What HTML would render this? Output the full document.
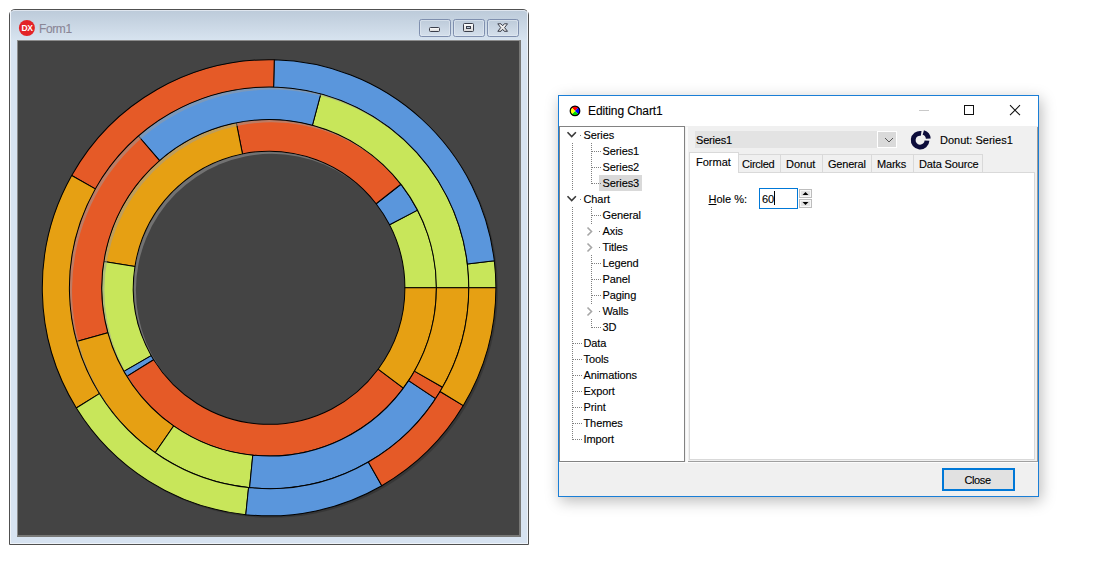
<!DOCTYPE html>
<html><head><meta charset="utf-8">
<style>
html,body{margin:0;padding:0;background:#fff;width:1096px;height:563px;overflow:hidden;position:relative;font-family:"Liberation Sans",sans-serif;}
.a{position:absolute;box-sizing:border-box;}
.t{position:absolute;white-space:pre;font-family:"Liberation Sans",sans-serif;line-height:1;-webkit-text-stroke:0.12px currentColor;}
</style></head><body>

<!-- ============ FORM1 WINDOW ============ -->
<div class="a" style="left:9px;top:9px;width:520px;height:536px;border:1px solid #505050;border-radius:6px 6px 0 0;background:#d7e3f1;"></div>
<div class="a" style="left:10px;top:10px;width:518px;height:31px;border-radius:5px 5px 0 0;background:linear-gradient(#bdcbda,#d8e4f0);border-top:1px solid #dfe6ef;"></div>
<div class="a" style="left:10px;top:11px;width:1px;height:533px;background:#eef3f9;"></div>
<div class="a" style="left:527px;top:11px;width:1px;height:533px;background:#eef3f9;"></div>
<div class="a" style="left:10px;top:543px;width:518px;height:1px;background:#eef3f9;"></div>
<div class="a" style="left:17px;top:40px;width:504px;height:497px;background:#444;border-top:1px solid #8c8c8c;border-left:1px solid #8c8c8c;border-right:2px solid #787876;border-bottom:2px solid #787876;"></div>

<svg class="a" style="left:0;top:0" width="1096" height="563" viewBox="0 0 1096 563">
<defs><clipPath id="pc"><rect x="18" y="41" width="501" height="494"/></clipPath></defs>
<g clip-path="url(#pc)">
<g transform="translate(269.1,287.8) scale(1,1.0055) translate(-269.1,-287.8)"><mask id="ms"><rect x="0" y="0" width="1096" height="563" fill="#fff"/><circle cx="269.1" cy="287.8" r="226.8" fill="#000"/></mask>
<circle cx="271.1" cy="289.8" r="226.8" fill="#2a2a2a" opacity="0.5" mask="url(#ms)"/>
<path d="M436.40,287.80A167.3,167.3 0 0 0 417.50,210.55L389.56,225.09A135.8,135.8 0 0 1 404.90,287.80Z" fill="#c8e65a" stroke="#000" stroke-width="1.0" stroke-linejoin="round"/>
<path d="M417.50,210.55A167.3,167.3 0 0 0 400.93,184.80L376.11,204.19A135.8,135.8 0 0 1 389.56,225.09Z" fill="#5a96dc" stroke="#000" stroke-width="1.0" stroke-linejoin="round"/>
<path d="M400.93,184.80A167.3,167.3 0 0 0 236.32,123.74L242.49,154.63A135.8,135.8 0 0 1 376.11,204.19Z" fill="#e55a27" stroke="#000" stroke-width="1.0" stroke-linejoin="round"/>
<path d="M236.32,123.74A167.3,167.3 0 0 0 103.86,261.63L134.97,266.56A135.8,135.8 0 0 1 242.49,154.63Z" fill="#e6a013" stroke="#000" stroke-width="1.0" stroke-linejoin="round"/>
<path d="M103.86,261.63A167.3,167.3 0 0 0 123.92,370.94L151.26,355.29A135.8,135.8 0 0 1 134.97,266.56Z" fill="#c8e65a" stroke="#000" stroke-width="1.0" stroke-linejoin="round"/>
<path d="M123.92,370.94A167.3,167.3 0 0 0 126.91,375.96L153.68,359.36A135.8,135.8 0 0 1 151.26,355.29Z" fill="#5a96dc" stroke="#000" stroke-width="1.0" stroke-linejoin="round"/>
<path d="M126.91,375.96A167.3,167.3 0 0 0 403.41,387.55L378.12,368.77A135.8,135.8 0 0 1 153.68,359.36Z" fill="#e55a27" stroke="#000" stroke-width="1.0" stroke-linejoin="round"/>
<path d="M403.41,387.55A167.3,167.3 0 0 0 436.40,287.80L404.90,287.80A135.8,135.8 0 0 1 378.12,368.77Z" fill="#e6a013" stroke="#000" stroke-width="1.0" stroke-linejoin="round"/>
<path d="M468.80,287.80A199.7,199.7 0 0 0 320.79,94.90L312.40,126.20A167.3,167.3 0 0 1 436.40,287.80Z" fill="#c8e65a" stroke="#000" stroke-width="1.0" stroke-linejoin="round"/>
<path d="M320.79,94.90A199.7,199.7 0 0 0 138.35,136.86L159.56,161.35A167.3,167.3 0 0 1 312.40,126.20Z" fill="#5a96dc" stroke="#000" stroke-width="1.0" stroke-linejoin="round"/>
<path d="M138.35,136.86A199.7,199.7 0 0 0 76.66,341.17L107.88,332.51A167.3,167.3 0 0 1 159.56,161.35Z" fill="#e55a27" stroke="#000" stroke-width="1.0" stroke-linejoin="round"/>
<path d="M76.66,341.17A199.7,199.7 0 0 0 155.13,451.78L173.62,425.18A167.3,167.3 0 0 1 107.88,332.51Z" fill="#e6a013" stroke="#000" stroke-width="1.0" stroke-linejoin="round"/>
<path d="M155.13,451.78A199.7,199.7 0 0 0 249.61,486.55L252.77,454.30A167.3,167.3 0 0 1 173.62,425.18Z" fill="#c8e65a" stroke="#000" stroke-width="1.0" stroke-linejoin="round"/>
<path d="M249.61,486.55A199.7,199.7 0 0 0 435.63,398.02L408.61,380.14A167.3,167.3 0 0 1 252.77,454.30Z" fill="#5a96dc" stroke="#000" stroke-width="1.0" stroke-linejoin="round"/>
<path d="M435.63,398.02A199.7,199.7 0 0 0 442.57,386.74L414.42,370.69A167.3,167.3 0 0 1 408.61,380.14Z" fill="#e55a27" stroke="#000" stroke-width="1.0" stroke-linejoin="round"/>
<path d="M442.57,386.74A199.7,199.7 0 0 0 468.80,287.80L436.40,287.80A167.3,167.3 0 0 1 414.42,370.69Z" fill="#e6a013" stroke="#000" stroke-width="1.0" stroke-linejoin="round"/>
<path d="M495.90,287.80A226.8,226.8 0 0 0 494.30,260.95L467.40,264.15A199.7,199.7 0 0 1 468.80,287.80Z" fill="#c8e65a" stroke="#000" stroke-width="1.0" stroke-linejoin="round"/>
<path d="M494.30,260.95A226.8,226.8 0 0 0 274.25,61.06L273.63,88.15A199.7,199.7 0 0 1 467.40,264.15Z" fill="#5a96dc" stroke="#000" stroke-width="1.0" stroke-linejoin="round"/>
<path d="M274.25,61.06A226.8,226.8 0 0 0 71.70,176.12L95.29,189.46A199.7,199.7 0 0 1 273.63,88.15Z" fill="#e55a27" stroke="#000" stroke-width="1.0" stroke-linejoin="round"/>
<path d="M71.70,176.12A226.8,226.8 0 0 0 76.34,407.31L99.38,393.03A199.7,199.7 0 0 1 95.29,189.46Z" fill="#e6a013" stroke="#000" stroke-width="1.0" stroke-linejoin="round"/>
<path d="M76.34,407.31A226.8,226.8 0 0 0 245.79,513.40L248.57,486.44A199.7,199.7 0 0 1 99.38,393.03Z" fill="#c8e65a" stroke="#000" stroke-width="1.0" stroke-linejoin="round"/>
<path d="M245.79,513.40A226.8,226.8 0 0 0 381.81,484.61L368.35,461.09A199.7,199.7 0 0 1 248.57,486.44Z" fill="#5a96dc" stroke="#000" stroke-width="1.0" stroke-linejoin="round"/>
<path d="M381.81,484.61A226.8,226.8 0 0 0 463.30,404.95L440.10,390.95A199.7,199.7 0 0 1 368.35,461.09Z" fill="#e55a27" stroke="#000" stroke-width="1.0" stroke-linejoin="round"/>
<path d="M463.30,404.95A226.8,226.8 0 0 0 495.90,287.80L468.80,287.80A199.7,199.7 0 0 1 440.10,390.95Z" fill="#e6a013" stroke="#000" stroke-width="1.0" stroke-linejoin="round"/>
<mask id="m0"><rect x="0" y="0" width="1096" height="563" fill="#fff"/><circle cx="271.70000000000005" cy="290.40000000000003" r="135.8" fill="#000"/></mask>
<circle cx="269.1" cy="287.8" r="135.3" fill="#9b9b9b" opacity="0.53" mask="url(#m0)"/>
<mask id="m1"><rect x="0" y="0" width="1096" height="563" fill="#fff"/><circle cx="271.70000000000005" cy="290.40000000000003" r="167.3" fill="#000"/></mask>
<circle cx="269.1" cy="287.8" r="166.8" fill="#9b9b9b" opacity="0.53" mask="url(#m1)"/>
<mask id="m2"><rect x="0" y="0" width="1096" height="563" fill="#fff"/><circle cx="271.70000000000005" cy="290.40000000000003" r="199.7" fill="#000"/></mask>
<circle cx="269.1" cy="287.8" r="199.2" fill="#9b9b9b" opacity="0.53" mask="url(#m2)"/></g>
</g>
<!-- DX icon -->
<circle cx="26.9" cy="28" r="8" fill="#e32326"/>
<text x="26.9" y="31.2" text-anchor="middle" font-family="Liberation Sans" font-weight="bold" font-size="8.5" fill="#fff" letter-spacing="-0.6">DX</text>
<!-- title buttons -->
<defs><linearGradient id="bg1" x1="0" y1="0" x2="0" y2="1"><stop offset="0" stop-color="#bccad9"/><stop offset="1" stop-color="#d5e0ec"/></linearGradient>
<linearGradient id="ig1" x1="0" y1="0" x2="0" y2="1"><stop offset="0" stop-color="#ffffff"/><stop offset="1" stop-color="#d6d6d6"/></linearGradient></defs>
<g fill="url(#bg1)" stroke="#7f8fae" stroke-width="1">
<rect x="419.5" y="19.5" width="31" height="17" rx="2"/>
<rect x="453.5" y="19.5" width="31" height="17" rx="2"/>
<rect x="487.5" y="19.5" width="31" height="17" rx="2"/>
</g>
<g fill="none" stroke="#e4ebf3" stroke-width="1" opacity="0.6">
<rect x="420.5" y="20.5" width="29" height="15" rx="1.5"/>
<rect x="454.5" y="20.5" width="29" height="15" rx="1.5"/>
<rect x="488.5" y="20.5" width="29" height="15" rx="1.5"/>
</g>
<rect x="429.5" y="27.5" width="10" height="4" rx="1" fill="url(#ig1)" stroke="#3a3e4a" stroke-width="1"/>
<rect x="463.5" y="23.5" width="10" height="8" rx="1" fill="url(#ig1)" stroke="#3a3e4a" stroke-width="1"/>
<rect x="466.5" y="26.5" width="4" height="2" fill="#b9c6d6" stroke="#3a3e4a" stroke-width="1"/>
<path d="M497.8,23.8 L501,23.8 L502.65,25.8 L504.3,23.8 L507.5,23.8 L504.6,27.6 L507.5,31.3 L504.3,31.3 L502.65,29.3 L501,31.3 L497.8,31.3 L500.7,27.6 Z" fill="url(#ig1)" stroke="#3a3e4a" stroke-width="1" stroke-linejoin="round"/>
</svg>
<div class="t" style="left:39px;top:22.8px;font-size:12px;letter-spacing:-0.4px;color:#8a8696;">Form1</div>

<!-- ============ DIALOG ============ -->
<div class="a" style="left:558px;top:95px;width:481px;height:402px;border:1px solid #1a7ed6;background:#f0f0f0;box-shadow:2px 4px 14px rgba(0,0,0,0.28);"></div>
<div class="a" style="left:559px;top:96px;width:479px;height:30px;background:#fff;"></div>
<div class="t" style="left:588px;top:105px;font-size:12px;letter-spacing:-0.1px;color:#000;">Editing Chart1</div>

<svg class="a" style="left:0;top:0" width="1096" height="563" viewBox="0 0 1096 563">
<!-- title icon -->
<g transform="translate(575,110.9)">
<path d="M0,0 L-3.54,-3.54 A5,5 0 0 1 3.54,-3.54 Z" fill="#ff0000"/>
<path d="M0,0 L3.54,-3.54 A5,5 0 0 1 3.54,3.54 Z" fill="#0000ff"/>
<path d="M0,0 L3.54,3.54 A5,5 0 0 1 -3.54,3.54 Z" fill="#00e000"/>
<path d="M0,0 L-3.54,3.54 A5,5 0 0 1 -3.54,-3.54 Z" fill="#ffff00"/>
<circle r="4.8" fill="none" stroke="#000" stroke-width="1.2"/>
</g>
<!-- title buttons -->
<line x1="919" y1="110.5" x2="929" y2="110.5" stroke="#c9c9c9" stroke-width="1"/>
<rect x="964.5" y="105.5" width="9" height="9" fill="none" stroke="#111" stroke-width="1"/>
<path d="M1010,105.2 L1020,115.2 M1020,105.2 L1010,115.2" stroke="#111" stroke-width="1.1"/>
</svg>

<!-- tree -->
<div class="a" style="left:559px;top:126px;width:126px;height:336px;border:1px solid #828282;background:#fff;"></div>
<div class="a" style="left:599px;top:175px;width:43px;height:16px;background:#d9d9d9;"></div>
<div id="tree"></div>
<div class="t" style="left:583.5px;top:130.0px;font-size:11px;letter-spacing:-0.1px;color:#000;">Series</div>
<div class="t" style="left:602.5px;top:146.0px;font-size:11px;letter-spacing:-0.1px;color:#000;">Series1</div>
<div class="t" style="left:602.5px;top:162.0px;font-size:11px;letter-spacing:-0.1px;color:#000;">Series2</div>
<div class="t" style="left:602.5px;top:178.0px;font-size:11px;letter-spacing:-0.1px;color:#000;">Series3</div>
<div class="t" style="left:583.5px;top:194.0px;font-size:11px;letter-spacing:-0.1px;color:#000;">Chart</div>
<div class="t" style="left:602.5px;top:210.0px;font-size:11px;letter-spacing:-0.1px;color:#000;">General</div>
<div class="t" style="left:602.5px;top:226.0px;font-size:11px;letter-spacing:-0.1px;color:#000;">Axis</div>
<div class="t" style="left:602.5px;top:242.0px;font-size:11px;letter-spacing:-0.1px;color:#000;">Titles</div>
<div class="t" style="left:602.5px;top:258.0px;font-size:11px;letter-spacing:-0.1px;color:#000;">Legend</div>
<div class="t" style="left:602.5px;top:274.0px;font-size:11px;letter-spacing:-0.1px;color:#000;">Panel</div>
<div class="t" style="left:602.5px;top:290.0px;font-size:11px;letter-spacing:-0.1px;color:#000;">Paging</div>
<div class="t" style="left:602.5px;top:306.0px;font-size:11px;letter-spacing:-0.1px;color:#000;">Walls</div>
<div class="t" style="left:602.5px;top:322.0px;font-size:11px;letter-spacing:-0.1px;color:#000;">3D</div>
<div class="t" style="left:583.5px;top:338.0px;font-size:11px;letter-spacing:-0.1px;color:#000;">Data</div>
<div class="t" style="left:583.5px;top:354.0px;font-size:11px;letter-spacing:-0.1px;color:#000;">Tools</div>
<div class="t" style="left:583.5px;top:370.0px;font-size:11px;letter-spacing:-0.1px;color:#000;">Animations</div>
<div class="t" style="left:583.5px;top:386.0px;font-size:11px;letter-spacing:-0.1px;color:#000;">Export</div>
<div class="t" style="left:583.5px;top:402.0px;font-size:11px;letter-spacing:-0.1px;color:#000;">Print</div>
<div class="t" style="left:583.5px;top:418.0px;font-size:11px;letter-spacing:-0.1px;color:#000;">Themes</div>
<div class="t" style="left:583.5px;top:434.0px;font-size:11px;letter-spacing:-0.1px;color:#000;">Import</div>
<svg class="a" style="left:0;top:0" width="1096" height="563" viewBox="0 0 1096 563">
<path d="M567.5,132.3 L571.7,136.6 L575.9,132.3" fill="none" stroke="#3a3a3a" stroke-width="1.6"/>
<rect x="580" y="135.0" width="1" height="1" fill="#808080"/>
<line x1="592" y1="151.5" x2="601" y2="151.5" stroke="#808080" stroke-width="1" stroke-dasharray="1 1"/>
<line x1="592" y1="167.5" x2="601" y2="167.5" stroke="#808080" stroke-width="1" stroke-dasharray="1 1"/>
<line x1="592" y1="183.5" x2="601" y2="183.5" stroke="#808080" stroke-width="1" stroke-dasharray="1 1"/>
<path d="M567.5,196.3 L571.7,200.6 L575.9,196.3" fill="none" stroke="#3a3a3a" stroke-width="1.6"/>
<rect x="580" y="199.0" width="1" height="1" fill="#808080"/>
<line x1="592" y1="215.5" x2="601" y2="215.5" stroke="#808080" stroke-width="1" stroke-dasharray="1 1"/>
<path d="M587.5,227.5 L591.5,231.5 L587.5,235.5" fill="none" stroke="#a6a6a6" stroke-width="1.6"/>
<rect x="599" y="231.0" width="1" height="1" fill="#808080"/>
<path d="M587.5,243.5 L591.5,247.5 L587.5,251.5" fill="none" stroke="#a6a6a6" stroke-width="1.6"/>
<rect x="599" y="247.0" width="1" height="1" fill="#808080"/>
<line x1="592" y1="263.5" x2="601" y2="263.5" stroke="#808080" stroke-width="1" stroke-dasharray="1 1"/>
<line x1="592" y1="279.5" x2="601" y2="279.5" stroke="#808080" stroke-width="1" stroke-dasharray="1 1"/>
<line x1="592" y1="295.5" x2="601" y2="295.5" stroke="#808080" stroke-width="1" stroke-dasharray="1 1"/>
<path d="M587.5,307.5 L591.5,311.5 L587.5,315.5" fill="none" stroke="#a6a6a6" stroke-width="1.6"/>
<rect x="599" y="311.0" width="1" height="1" fill="#808080"/>
<line x1="592" y1="327.5" x2="601" y2="327.5" stroke="#808080" stroke-width="1" stroke-dasharray="1 1"/>
<line x1="573" y1="343.5" x2="582" y2="343.5" stroke="#808080" stroke-width="1" stroke-dasharray="1 1"/>
<line x1="573" y1="359.5" x2="582" y2="359.5" stroke="#808080" stroke-width="1" stroke-dasharray="1 1"/>
<line x1="573" y1="375.5" x2="582" y2="375.5" stroke="#808080" stroke-width="1" stroke-dasharray="1 1"/>
<line x1="573" y1="391.5" x2="582" y2="391.5" stroke="#808080" stroke-width="1" stroke-dasharray="1 1"/>
<line x1="573" y1="407.5" x2="582" y2="407.5" stroke="#808080" stroke-width="1" stroke-dasharray="1 1"/>
<line x1="573" y1="423.5" x2="582" y2="423.5" stroke="#808080" stroke-width="1" stroke-dasharray="1 1"/>
<line x1="573" y1="439.5" x2="582" y2="439.5" stroke="#808080" stroke-width="1" stroke-dasharray="1 1"/>
<line x1="572.5" y1="143" x2="572.5" y2="191" stroke="#808080" stroke-width="1" stroke-dasharray="1 1"/>
<line x1="572.5" y1="207" x2="572.5" y2="440" stroke="#808080" stroke-width="1" stroke-dasharray="1 1"/>
<line x1="591.5" y1="143" x2="591.5" y2="184" stroke="#808080" stroke-width="1" stroke-dasharray="1 1"/>
<line x1="591.5" y1="207" x2="591.5" y2="224" stroke="#808080" stroke-width="1" stroke-dasharray="1 1"/>
<line x1="591.5" y1="255" x2="591.5" y2="304" stroke="#808080" stroke-width="1" stroke-dasharray="1 1"/>
<line x1="591.5" y1="319" x2="591.5" y2="328" stroke="#808080" stroke-width="1" stroke-dasharray="1 1"/>
</svg>

<!-- right panel -->
<div class="a" style="left:686px;top:127px;width:2px;height:335px;background:#fbfbfb;"></div>
<div class="a" style="left:688px;top:461px;width:350px;height:1px;background:#a0a0a0;"></div>
<div class="a" style="left:1037px;top:127px;width:1px;height:335px;background:#a09c98;"></div>
<div class="a" style="left:559px;top:462px;width:479px;height:1px;background:#fcfcfc;"></div>
<div class="a" style="left:695px;top:131px;width:182px;height:17px;background:#e3e3e3;"></div>
<div class="t" style="left:696px;top:135px;font-size:11px;letter-spacing:-0.2px;color:#000;">Series1</div>
<div class="a" style="left:877px;top:131px;width:20px;height:17px;background:#dadada;border:1px solid #fff;"></div>
<svg class="a" style="left:0;top:0" width="1096" height="563" viewBox="0 0 1096 563">
<path d="M885,138 L889,142 L893,138" fill="none" stroke="#555" stroke-width="1"/>
<!-- donut icon -->
<g fill="#0d0d3b">
<path d="M921.55,131.01A9.3,9.3 0 1 0 929.39,140.69L924.59,140.44A4.5,4.5 0 1 1 920.80,135.76Z"/><path d="M930.69,138.61A9.3,9.3 0 0 0 923.96,130.16L922.64,134.77A4.5,4.5 0 0 1 925.89,138.86Z"/>
</g>
</svg>
<div class="t" style="left:940px;top:135px;font-size:11px;color:#000;">Donut: Series1</div>

<!-- tab page -->
<div class="a" style="left:689px;top:172px;width:346px;height:288px;background:#fff;border:1px solid #d9d9d9;"></div>
<div class="a" style="left:738px;top:154px;width:43px;height:19px;background:#f0f0f0;border:1px solid #d9d9d9;"></div>
<div class="a" style="left:780px;top:154px;width:43px;height:19px;background:#f0f0f0;border:1px solid #d9d9d9;"></div>
<div class="a" style="left:822px;top:154px;width:50px;height:19px;background:#f0f0f0;border:1px solid #d9d9d9;"></div>
<div class="a" style="left:871px;top:154px;width:43px;height:19px;background:#f0f0f0;border:1px solid #d9d9d9;"></div>
<div class="a" style="left:913px;top:154px;width:70px;height:19px;background:#f0f0f0;border:1px solid #d9d9d9;"></div>
<div class="a" style="left:689px;top:152px;width:50px;height:21px;background:#fff;border:1px solid #d9d9d9;border-bottom:none;"></div>
<div class="t" style="left:696px;top:156.6px;font-size:11px;color:#000;">Format</div>
<div class="t" style="left:742px;top:158.6px;font-size:11px;letter-spacing:-0.25px;color:#000;">Circled</div>
<div class="t" style="left:786px;top:158.6px;font-size:11px;color:#000;">Donut</div>
<div class="t" style="left:828px;top:158.6px;font-size:11px;letter-spacing:-0.2px;color:#000;">General</div>
<div class="t" style="left:877px;top:158.6px;font-size:11px;letter-spacing:-0.2px;color:#000;">Marks</div>
<div class="t" style="left:919px;top:158.6px;font-size:11px;letter-spacing:-0.15px;color:#000;">Data Source</div>

<div class="t" style="left:708.5px;top:193.7px;font-size:11px;color:#000;"><u>H</u>ole %:</div>
<div class="a" style="left:759px;top:188px;width:39px;height:21px;background:#fff;border:1px solid #0078d7;"></div>
<div class="t" style="left:762px;top:193.7px;font-size:11px;color:#000;">60</div>
<div class="a" style="left:774px;top:191px;width:1px;height:14px;background:#000;"></div>
<div class="a" style="left:799px;top:189px;width:13px;height:9px;background:#e3e3e3;border:1px solid #bdbdbd;box-shadow:inset 0 0 0 1px #f7f7f7;"></div>
<div class="a" style="left:799px;top:199px;width:13px;height:9px;background:#e3e3e3;border:1px solid #bdbdbd;box-shadow:inset 0 0 0 1px #f7f7f7;"></div>
<svg class="a" style="left:0;top:0" width="1096" height="563" viewBox="0 0 1096 563">
<path d="M802.5,195 L805.5,192 L808.5,195 Z" fill="#000"/>
<path d="M802.5,202 L805.5,205 L808.5,202 Z" fill="#000"/>
</svg>

<!-- close button -->
<div class="a" style="left:942px;top:468px;width:73px;height:23px;background:#e1e1e1;border:2px solid #0078d7;"></div>
<div class="t" style="left:964.5px;top:474.7px;font-size:11px;letter-spacing:-0.4px;color:#000;">Close</div>

</body></html>
